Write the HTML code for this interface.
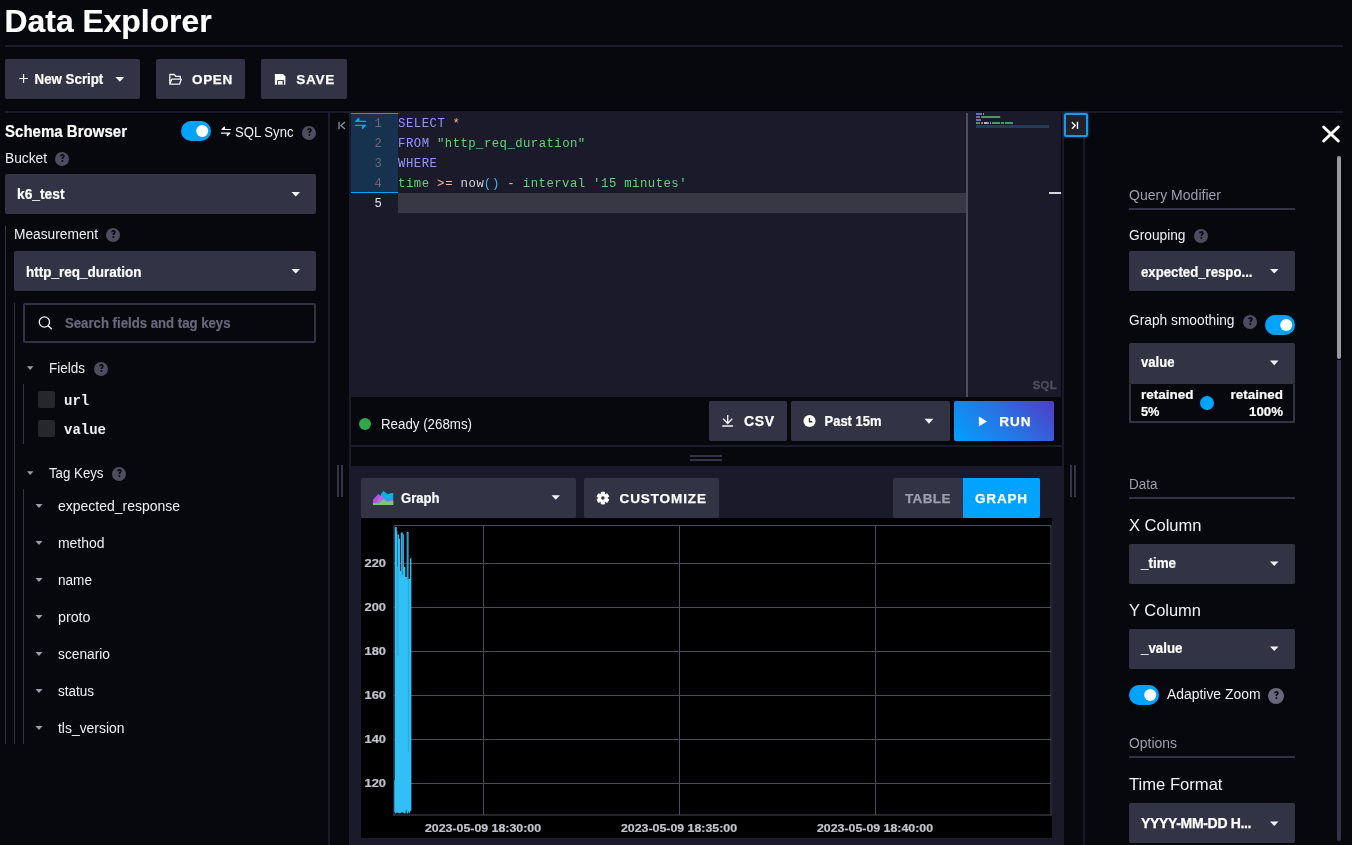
<!DOCTYPE html>
<html>
<head>
<meta charset="utf-8">
<title>Data Explorer</title>
<style>
*{box-sizing:border-box;margin:0;padding:0}
html,body{width:1352px;height:845px;overflow:hidden;background:#07070e}
body{font-family:"Liberation Sans",sans-serif;color:#f1f1f3;position:relative}
svg{position:absolute;left:0;top:0;will-change:transform}
text{white-space:pre}
</style>
</head>
<body>
<div style="position:absolute;left:5px;top:45px;width:1338px;height:2px;background:#1a1a2a;"></div>
<div style="position:absolute;left:5px;top:59px;width:135px;height:40px;background:#333346;border-radius:2px"></div>
<div style="position:absolute;left:156px;top:59px;width:89px;height:40px;background:#333346;border-radius:2px"></div>
<div style="position:absolute;left:261px;top:59px;width:86px;height:40px;background:#333346;border-radius:2px"></div>
<div style="position:absolute;left:5px;top:111px;width:1338px;height:2px;background:#1a1a2a;"></div>
<div style="position:absolute;left:5px;top:174px;width:311px;height:40px;background:#333346;border-radius:2px"></div>
<div style="position:absolute;left:5px;top:226px;width:1px;height:518px;background:#333346;"></div>
<div style="position:absolute;left:14px;top:251px;width:302px;height:40px;background:#333346;border-radius:2px"></div>
<div style="position:absolute;left:14px;top:303px;width:1px;height:441px;background:#333346;"></div>
<div style="position:absolute;left:23px;top:303px;width:293px;height:40px;border:2px solid #333346;border-radius:2px"></div>
<div style="position:absolute;left:23px;top:384px;width:1px;height:60px;background:#333346;"></div>
<div style="position:absolute;left:38px;top:391px;width:17px;height:17px;background:#26262d;border-radius:2px"></div>
<div style="position:absolute;left:38px;top:420px;width:17px;height:17px;background:#26262d;border-radius:2px"></div>
<div style="position:absolute;left:23px;top:489px;width:1px;height:255px;background:#333346;"></div>
<div style="position:absolute;left:328px;top:113px;width:2px;height:732px;background:#1a1a2a;"></div>
<div style="position:absolute;left:337px;top:465px;width:2px;height:32px;background:#333346;"></div>
<div style="position:absolute;left:341px;top:465px;width:2px;height:32px;background:#333346;"></div>
<div style="position:absolute;left:349px;top:111px;width:713px;height:734px;background:#1a1a2a;"></div>
<div style="position:absolute;left:351px;top:113px;width:47px;height:80px;background:#16324f;border-top:1px solid #00a3ff;border-bottom:1px solid #00a3ff"></div>
<div style="position:absolute;left:398px;top:193px;width:568px;height:20px;background:#383844;"></div>
<div style="position:absolute;left:966px;top:113px;width:2px;height:284px;background:#4d4d60;"></div>
<div style="position:absolute;left:351px;top:397px;width:711px;height:69px;background:#07070e;"></div>
<div style="position:absolute;left:351px;top:445px;width:711px;height:2px;background:#1a1a2a;"></div>
<div style="position:absolute;left:709px;top:401px;width:78px;height:40px;background:#333346;border-radius:2px"></div>
<div style="position:absolute;left:791px;top:401px;width:159px;height:40px;background:#333346;border-radius:2px"></div>
<div style="position:absolute;left:954px;top:401px;width:100px;height:40px;background:linear-gradient(45deg,#00a3ff 0%,#2b6fe0 55%,#513cc6 100%);border-radius:2px"></div>
<div style="position:absolute;left:690px;top:455px;width:32px;height:2px;background:#333346;"></div>
<div style="position:absolute;left:690px;top:459px;width:32px;height:2px;background:#333346;"></div>
<div style="position:absolute;left:361px;top:478px;width:215px;height:40px;background:#333346;border-radius:2px"></div>
<div style="position:absolute;left:584px;top:478px;width:135px;height:40px;background:#333346;border-radius:2px"></div>
<div style="position:absolute;left:893px;top:478px;width:70px;height:40px;background:#333346;border-radius:2px 0 0 2px"></div>
<div style="position:absolute;left:963px;top:478px;width:77px;height:40px;background:#00a3ff;border-radius:0 2px 2px 0"></div>
<div style="position:absolute;left:361px;top:518px;width:691px;height:320px;background:#000;"></div>
<div style="position:absolute;left:1061.2px;top:113px;width:0.8px;height:284px;background:#07070e;"></div>
<div style="position:absolute;left:1062px;top:113px;width:2px;height:732px;background:#1a1a2a;"></div>
<div style="position:absolute;left:1083px;top:113px;width:2px;height:732px;background:#1a1a2a;"></div>
<div style="position:absolute;left:1064px;top:113px;width:24px;height:24px;border:2px solid #1c98ea;border-radius:2.5px;background:#212129;box-shadow:0 0 2px #1c98ea"></div>
<div style="position:absolute;left:1070px;top:465px;width:2px;height:32px;background:#333346;"></div>
<div style="position:absolute;left:1074px;top:465px;width:2px;height:32px;background:#333346;"></div>
<div style="position:absolute;left:1337px;top:360px;width:4px;height:481px;background:#333346;border-radius:0 0 2px 2px"></div>
<div style="position:absolute;left:1337px;top:156px;width:4px;height:203px;background:#9a9a9a;border-radius:2px"></div>
<div style="position:absolute;left:1129px;top:208px;width:166px;height:2px;background:#333346;"></div>
<div style="position:absolute;left:1129px;top:251px;width:166px;height:40px;background:#333346;border-radius:2px"></div>
<div style="position:absolute;left:1129px;top:343px;width:166px;height:41px;background:#333346;border-radius:2px"></div>
<div style="position:absolute;left:1129px;top:384px;width:166px;height:39px;border:2px solid #333346;border-top:none"></div>
<div style="position:absolute;left:1129px;top:497px;width:166px;height:2px;background:#333346;"></div>
<div style="position:absolute;left:1129px;top:544px;width:166px;height:40px;background:#333346;border-radius:2px"></div>
<div style="position:absolute;left:1129px;top:629px;width:166px;height:40px;background:#333346;border-radius:2px"></div>
<div style="position:absolute;left:1129px;top:756px;width:166px;height:2px;background:#333346;"></div>
<div style="position:absolute;left:1129px;top:803px;width:166px;height:40px;background:#333346;border-radius:2px"></div>
<svg width="1352" height="845" viewBox="0 0 1352 845">
<path d="M115.4,77 h8.8 l-4.4,4.8 z" fill="#f1f1f3"/>
<rect x="181" y="121" width="30" height="20" rx="10" fill="#00a3ff"/>
<circle cx="202.2" cy="131" r="6" fill="#fff"/>
<circle cx="309.0" cy="133.0" r="7.0" fill="#4d4d60"/>
<path d="M307.90000000000003,130.3 C307.90000000000003,128.4 310.85,128.4 310.85,130.05 C310.85,131.3 309.35,131.4 309.35,133.1" stroke="#07070e" stroke-width="1.7" fill="none"/>
<circle cx="309.35" cy="135.05" r="1.0" fill="#07070e"/>
<circle cx="62.0" cy="159.0" r="7.0" fill="#4d4d60"/>
<path d="M60.9,156.3 C60.9,154.4 63.85,154.4 63.85,156.05 C63.85,157.3 62.35,157.4 62.35,159.1" stroke="#07070e" stroke-width="1.7" fill="none"/>
<circle cx="62.35" cy="161.05" r="1.0" fill="#07070e"/>
<path d="M291.5,192 h8.5 l-4.25,4.6 z" fill="#f1f1f3"/>
<circle cx="113.0" cy="235.0" r="7.0" fill="#4d4d60"/>
<path d="M111.89999999999999,232.3 C111.89999999999999,230.4 114.85,230.4 114.85,232.05 C114.85,233.3 113.35,233.4 113.35,235.1" stroke="#07070e" stroke-width="1.7" fill="none"/>
<circle cx="113.35" cy="237.05" r="1.0" fill="#07070e"/>
<path d="M291.5,269 h8.5 l-4.25,4.6 z" fill="#f1f1f3"/>
<path d="M27,366.2 h6.4 l-3.2,3.8 z" fill="#9e9ead"/>
<circle cx="101.0" cy="369.0" r="7.0" fill="#4d4d60"/>
<path d="M99.89999999999999,366.3 C99.89999999999999,364.4 102.85,364.4 102.85,366.05 C102.85,367.3 101.35,367.4 101.35,369.1" stroke="#07070e" stroke-width="1.7" fill="none"/>
<circle cx="101.35" cy="371.05" r="1.0" fill="#07070e"/>
<path d="M27,471.2 h6.4 l-3.2,3.8 z" fill="#9e9ead"/>
<circle cx="119.0" cy="474.0" r="7.0" fill="#4d4d60"/>
<path d="M117.89999999999999,471.3 C117.89999999999999,469.4 120.85,469.4 120.85,471.05 C120.85,472.3 119.35,472.4 119.35,474.1" stroke="#07070e" stroke-width="1.7" fill="none"/>
<circle cx="119.35" cy="476.05" r="1.0" fill="#07070e"/>
<path d="M35.5,504.0 h7 l-3.5,4 z" fill="#9e9ead"/>
<path d="M35.5,541.0 h7 l-3.5,4 z" fill="#9e9ead"/>
<path d="M35.5,578.0 h7 l-3.5,4 z" fill="#9e9ead"/>
<path d="M35.5,615.0 h7 l-3.5,4 z" fill="#9e9ead"/>
<path d="M35.5,652.0 h7 l-3.5,4 z" fill="#9e9ead"/>
<path d="M35.5,689.0 h7 l-3.5,4 z" fill="#9e9ead"/>
<path d="M35.5,726.0 h7 l-3.5,4 z" fill="#9e9ead"/>
<circle cx="365" cy="424" r="6" fill="#2fa74d"/>
<path d="M924.5,418.8 h9 l-4.5,5 z" fill="#f1f1f3"/>
<path d="M551.5,495.2 h8.5 l-4.25,4.6 z" fill="#f1f1f3"/>
<rect x="394" y="563" width="657" height="1" fill="#4b4b5f" shape-rendering="crispEdges"/>
<rect x="394" y="607" width="657" height="1" fill="#4b4b5f" shape-rendering="crispEdges"/>
<rect x="394" y="651" width="657" height="1" fill="#4b4b5f" shape-rendering="crispEdges"/>
<rect x="394" y="695" width="657" height="1" fill="#4b4b5f" shape-rendering="crispEdges"/>
<rect x="394" y="739" width="657" height="1" fill="#4b4b5f" shape-rendering="crispEdges"/>
<rect x="394" y="783" width="657" height="1" fill="#4b4b5f" shape-rendering="crispEdges"/>
<rect x="483" y="525" width="1" height="290" fill="#4b4b5f" shape-rendering="crispEdges"/>
<rect x="679" y="525" width="1" height="290" fill="#4b4b5f" shape-rendering="crispEdges"/>
<rect x="875" y="525" width="1" height="290" fill="#4b4b5f" shape-rendering="crispEdges"/>
<rect x="394" y="525" width="657" height="1" fill="#4b4b5f" shape-rendering="crispEdges"/>
<rect x="393.5" y="814.5" width="658" height="1" fill="#4b4b5f"/>
<rect x="393.5" y="525" width="1" height="290.5" fill="#4b4b5f"/>
<rect x="1050.5" y="525" width="1" height="290.5" fill="#4b4b5f"/>
<path d="M394.8,780 L394.8,527 L396.8,527 L396.8,531.2 L397.3,531.2 L397.3,534.4 L399,534.4 L399,538.7 L400,538.7 L400,571 L400.8,571 L400.8,532.5 L402.8,532.5 L402.8,534.4 L403.9,534.4 L403.9,567 L405.3,567 L405.3,577 L406.7,577 L406.7,532 L408.6,532 L408.6,579 L410,579 L410,558.2 L411.4,558.2 L411.4,810.5 L410.3,811 L409.9,813.2 L409.1,813.2 L408.7,811 L408.2,813.4 L406.6,813.4 L406.1,808.6 L405.6,813.4 L404.5,813.6 L402,812.2 L400,813.6 L397,812.6 L395.5,813.8 L394.3,811.5 L394.3,780.5 L394.8,780 Z" fill="#31c0f6"/>
<path d="M397.55,533 V567" stroke="#000" stroke-opacity=".55" stroke-width=".7" fill="none"/>
<path d="M397.75,567 V656" stroke="#000" stroke-opacity=".3" stroke-width=".5" fill="none"/>
<path d="M402.3,535 V575" stroke="#000" stroke-opacity=".55" stroke-width=".6" fill="none"/>
<path d="M407.85,533 V580" stroke="#000" stroke-opacity=".55" stroke-width=".5" fill="none"/>
<path d="M408.35,580 V752" stroke="#000" stroke-opacity=".3" stroke-width=".5" fill="none"/>
<circle cx="1201.0" cy="236.0" r="7.0" fill="#4d4d60"/>
<path d="M1199.8999999999999,233.3 C1199.8999999999999,231.4 1202.85,231.4 1202.85,233.05 C1202.85,234.3 1201.35,234.4 1201.35,236.1" stroke="#07070e" stroke-width="1.7" fill="none"/>
<circle cx="1201.35" cy="238.05" r="1.0" fill="#07070e"/>
<path d="M1270,269 h8.5 l-4.25,4.6 z" fill="#f1f1f3"/>
<circle cx="1250.0" cy="322.0" r="7.0" fill="#4d4d60"/>
<path d="M1248.8999999999999,319.3 C1248.8999999999999,317.4 1251.85,317.4 1251.85,319.05 C1251.85,320.3 1250.35,320.4 1250.35,322.1" stroke="#07070e" stroke-width="1.7" fill="none"/>
<circle cx="1250.35" cy="324.05" r="1.0" fill="#07070e"/>
<rect x="1265" y="315" width="30" height="20" rx="10" fill="#00a3ff"/>
<circle cx="1286.2" cy="325" r="6" fill="#fff"/>
<path d="M1270,360.6 h8.5 l-4.25,4.6 z" fill="#f1f1f3"/>
<circle cx="1207" cy="403" r="7" fill="#00a3ff"/>
<path d="M1270,561.5 h8.5 l-4.25,4.6 z" fill="#f1f1f3"/>
<path d="M1270,646.5 h8.5 l-4.25,4.6 z" fill="#f1f1f3"/>
<rect x="1129" y="685" width="30" height="20" rx="10" fill="#00a3ff"/>
<circle cx="1150.2" cy="695" r="6" fill="#fff"/>
<circle cx="1276.0" cy="696.0" r="8.0" fill="#68687b"/>
<path d="M1274.8999999999999,693.3 C1274.8999999999999,691.4 1277.85,691.4 1277.85,693.05 C1277.85,694.3 1276.35,694.4 1276.35,696.1" stroke="#07070e" stroke-width="1.7" fill="none"/>
<circle cx="1276.35" cy="698.05" r="1.0" fill="#07070e"/>
<path d="M1270,821.5 h8.5 l-4.25,4.6 z" fill="#f1f1f3"/>
<path d="M19.2,78.5 h8.7 M23.55,74.1 v8.8" stroke="#f1f1f3" stroke-width="1.2" fill="none"/>
<path d="M169.8,84.2 V74.5 H174.3 L175.8,76.3 H180.3 V78.4 M169.8,84.2 L171.7,79.2 H181.3 L179.5,84.2 Z" stroke="#f1f1f3" stroke-width="1.3" stroke-linejoin="round" fill="none"/>
<path d="M274.9,74 H283 L285.4,76.4 V84.7 H274.9 Z" fill="#fff"/>
<rect x="277.1" y="80.1" width="6.9" height="4.8" fill="#333346"/>
<rect x="278" y="81" width="4.9" height="3.6" fill="#f1f1f3"/>
<rect x="282.2" y="81" width="0.8" height="3.6" fill="#9e9ead"/>
<path d="M230.9,129.5 H222.0 L224.5,127.0 L224.5,129.5 M221.1,133.1 H230.0 L227.29999999999998,135.6 L227.29999999999998,133.1" stroke="#f1f1f3" stroke-width="1.1" stroke-linejoin="round" fill="#f1f1f3"/>
<circle cx="44.4" cy="322" r="5.15" stroke="#f1f1f3" stroke-width="1.3" fill="none"/>
<path d="M48.2,325.9 L51.4,328.7" stroke="#f1f1f3" stroke-width="1.4" stroke-linecap="round"/>
<path d="M339,121.8 V129.3 M345,122.1 L340.9,125.6 L345,129.1" stroke="#8e8e9e" stroke-width="1.3" fill="none"/>
<path d="M366.0,121.4 H355.70000000000005 L358.90000000000003,118.4 L358.90000000000003,121.4 M355.1,125.4 H365.70000000000005 L362.5,128.4 L362.5,125.4" stroke="#00a3ff" stroke-width="1.2" stroke-linejoin="round" fill="#00a3ff"/>
<path d="M1071.9,122.3 L1075.3,125.5 L1071.9,128.7 M1077.5,121.7 V129.1" stroke="#fff" stroke-width="1.4" fill="none"/>
<path d="M1323.7,127 L1338.3,141 M1338.3,127 L1323.7,141" stroke="#fff" stroke-width="3" stroke-linecap="round" fill="none"/>
<path d="M727.7,415.1 V423.5 M723.2,418.7 L727.7,423.4 L732.2,418.7 M722.2,426 H733.1" stroke="#f1f1f3" stroke-width="1.35" fill="none"/>
<circle cx="809.5" cy="421" r="6.05" fill="#fff"/>
<path d="M809.5,417.9 V421.7 H812.4" stroke="#333346" stroke-width="1.4" fill="none"/>
<path d="M978.9,416.5 L987,421.4 L978.9,426.3 Z" fill="#fff"/>
<path d="M380.9,494 L383.4,491 L387.9,494.3 L391.2,493.1 L393.2,493.1 V505 H380.9 Z" fill="#0bb1e2"/>
<path d="M373,500 L378.4,494.1 L379.9,495.4 L382.6,496 L387.5,500.9 L389.9,500.2 L393.2,499.6 V505 H373 Z" fill="#a96cee"/>
<path d="M373,500 L378.4,494.1 L379.9,495.4 L376,503 L373,502.5 Z" fill="#bb4fd0"/>
<path d="M373,503 L378.3,503.6 L383.2,499.4 L387.5,502 L391.2,500.9 L393.2,501 V505 H373 Z" fill="#7bc96d"/>
<polygon points="601.22,492.24 604.58,492.24 604.51,493.90 605.73,494.60 607.14,493.71 608.82,496.62 607.34,497.40 607.34,498.80 608.82,499.58 607.14,502.49 605.73,501.60 604.51,502.30 604.58,503.96 601.22,503.96 601.29,502.30 600.07,501.60 598.66,502.49 596.98,499.58 598.46,498.80 598.46,497.40 596.98,496.62 598.66,493.71 600.07,494.60 601.29,493.90" fill="#fff" stroke="#fff" stroke-width="1" stroke-linejoin="round"/>
<circle cx="602.9" cy="498.1" r="1.75" fill="#333346"/>
<rect x="976" y="113" width="6" height="2" fill="#6b6cc0"/>
<rect x="983" y="113" width="0.9" height="2" fill="#c08a78"/>
<rect x="976" y="116" width="4" height="2" fill="#6b6cc0"/>
<rect x="981.2" y="116" width="19" height="2" fill="#4c9a5e"/>
<rect x="976" y="119" width="5" height="2" fill="#6b6cc0"/>
<rect x="976" y="122" width="4" height="2" fill="#4c9a5e"/>
<rect x="981.2" y="122" width="1.8" height="2" fill="#c08a78"/>
<rect x="984" y="122" width="3" height="2" fill="#b9b9c5"/>
<rect x="987" y="122" width="2" height="2" fill="#3f9fd0"/>
<rect x="990" y="122" width="0.9" height="2" fill="#c08a78"/>
<rect x="992" y="122" width="8" height="2" fill="#4c9a5e"/>
<rect x="1001" y="122" width="3" height="2" fill="#4c9a5e"/>
<rect x="1005" y="122" width="8" height="2" fill="#4c9a5e"/>
<rect x="976" y="125" width="73" height="3" fill="#243b5a"/>
<rect x="1049" y="192" width="12" height="2" fill="#d5d5dd"/>
<text x="4.6" y="31.7" font-family="Liberation Sans, sans-serif" font-size="31" font-weight="bold" stroke="#fff" stroke-width="0.2" fill="#fff" textLength="207" lengthAdjust="spacingAndGlyphs" xml:space="preserve">Data Explorer</text>
<text x="34.6" y="84" font-family="Liberation Sans, sans-serif" font-size="14" font-weight="bold" stroke="#fff" stroke-width="0.2" fill="#fff" textLength="68.7" lengthAdjust="spacingAndGlyphs" xml:space="preserve">New Script</text>
<text x="192" y="84" font-family="Liberation Sans, sans-serif" font-size="13.5" font-weight="bold" stroke="#fff" stroke-width="0.25" fill="#fff" textLength="40.3" lengthAdjust="spacing" xml:space="preserve">OPEN</text>
<text x="296.3" y="84" font-family="Liberation Sans, sans-serif" font-size="13.5" font-weight="bold" stroke="#fff" stroke-width="0.25" fill="#fff" textLength="38" lengthAdjust="spacing" xml:space="preserve">SAVE</text>
<text x="5" y="136.5" font-family="Liberation Sans, sans-serif" font-size="16" font-weight="bold" stroke="#fff" stroke-width="0.2" fill="#fff" textLength="122" lengthAdjust="spacingAndGlyphs" xml:space="preserve">Schema Browser</text>
<text x="235" y="136.5" font-family="Liberation Sans, sans-serif" font-size="14" fill="#f1f1f3" textLength="58.5" lengthAdjust="spacingAndGlyphs" xml:space="preserve">SQL Sync</text>
<text x="5" y="162.5" font-family="Liberation Sans, sans-serif" font-size="14" fill="#f1f1f3" textLength="42" lengthAdjust="spacingAndGlyphs" xml:space="preserve">Bucket</text>
<text x="17" y="199" font-family="Liberation Sans, sans-serif" font-size="14" font-weight="bold" stroke="#fff" stroke-width="0.2" fill="#fff" textLength="47.5" lengthAdjust="spacingAndGlyphs" xml:space="preserve">k6_test</text>
<text x="14" y="239" font-family="Liberation Sans, sans-serif" font-size="14" fill="#f1f1f3" textLength="84" lengthAdjust="spacingAndGlyphs" xml:space="preserve">Measurement</text>
<text x="26" y="276.5" font-family="Liberation Sans, sans-serif" font-size="14" font-weight="bold" stroke="#fff" stroke-width="0.2" fill="#fff" textLength="115.5" lengthAdjust="spacingAndGlyphs" xml:space="preserve">http_req_duration</text>
<text x="65" y="328" font-family="Liberation Sans, sans-serif" font-size="14" font-weight="bold" stroke="#68687b" stroke-width="0.2" fill="#68687b" textLength="165.5" lengthAdjust="spacingAndGlyphs" xml:space="preserve">Search fields and tag keys</text>
<text x="49" y="372.5" font-family="Liberation Sans, sans-serif" font-size="14" fill="#f1f1f3" textLength="36" lengthAdjust="spacingAndGlyphs" xml:space="preserve">Fields</text>
<text x="64" y="405" font-family="Liberation Mono, monospace" font-size="14" font-weight="bold" fill="#f1f1f3" textLength="25.2" lengthAdjust="spacing" xml:space="preserve">url</text>
<text x="64" y="434" font-family="Liberation Mono, monospace" font-size="14" font-weight="bold" fill="#f1f1f3" textLength="42" lengthAdjust="spacing" xml:space="preserve">value</text>
<text x="49" y="477.5" font-family="Liberation Sans, sans-serif" font-size="14" fill="#f1f1f3" textLength="54.5" lengthAdjust="spacingAndGlyphs" xml:space="preserve">Tag Keys</text>
<text x="58" y="510.5" font-family="Liberation Sans, sans-serif" font-size="14" fill="#f1f1f3" textLength="122" lengthAdjust="spacingAndGlyphs" xml:space="preserve">expected_response</text>
<text x="58" y="547.5" font-family="Liberation Sans, sans-serif" font-size="14" fill="#f1f1f3" textLength="46.5" lengthAdjust="spacingAndGlyphs" xml:space="preserve">method</text>
<text x="58" y="584.5" font-family="Liberation Sans, sans-serif" font-size="14" fill="#f1f1f3" textLength="34" lengthAdjust="spacingAndGlyphs" xml:space="preserve">name</text>
<text x="58" y="621.5" font-family="Liberation Sans, sans-serif" font-size="14" fill="#f1f1f3" textLength="32.5" lengthAdjust="spacingAndGlyphs" xml:space="preserve">proto</text>
<text x="58" y="658.5" font-family="Liberation Sans, sans-serif" font-size="14" fill="#f1f1f3" textLength="52" lengthAdjust="spacingAndGlyphs" xml:space="preserve">scenario</text>
<text x="58" y="695.5" font-family="Liberation Sans, sans-serif" font-size="14" fill="#f1f1f3" textLength="36" lengthAdjust="spacingAndGlyphs" xml:space="preserve">status</text>
<text x="58" y="732.5" font-family="Liberation Sans, sans-serif" font-size="14" fill="#f1f1f3" textLength="66.5" lengthAdjust="spacingAndGlyphs" xml:space="preserve">tls_version</text>
<text x="374.4" y="127.2" font-family="Liberation Mono, monospace" font-size="12.2" fill="#68687b" xml:space="preserve">1</text>
<text x="374.4" y="147.2" font-family="Liberation Mono, monospace" font-size="12.2" fill="#68687b" xml:space="preserve">2</text>
<text x="374.4" y="167.2" font-family="Liberation Mono, monospace" font-size="12.2" fill="#68687b" xml:space="preserve">3</text>
<text x="374.4" y="187.2" font-family="Liberation Mono, monospace" font-size="12.2" fill="#68687b" xml:space="preserve">4</text>
<text x="374.4" y="207.2" font-family="Liberation Mono, monospace" font-size="12.2" fill="#e4e4ea" xml:space="preserve">5</text>
<text x="398" y="127.2" font-family="Liberation Mono, monospace" font-size="12.3" fill="#9394ff" textLength="46.8" lengthAdjust="spacing" xml:space="preserve">SELECT</text>
<text x="444.8" y="127.2" font-family="Liberation Mono, monospace" font-size="12.3" fill="#9394ff" xml:space="preserve"> </text>
<text x="452.6" y="127.2" font-family="Liberation Mono, monospace" font-size="12.3" fill="#ffb6a0" xml:space="preserve">*</text>
<text x="398" y="147.2" font-family="Liberation Mono, monospace" font-size="12.3" fill="#9394ff" textLength="31.2" lengthAdjust="spacing" xml:space="preserve">FROM</text>
<text x="429.2" y="147.2" font-family="Liberation Mono, monospace" font-size="12.3" fill="#9394ff" xml:space="preserve"> </text>
<text x="437.0" y="147.2" font-family="Liberation Mono, monospace" font-size="12.3" fill="#67d17a" textLength="148.2" lengthAdjust="spacing" xml:space="preserve">&quot;http_req_duration&quot;</text>
<text x="398" y="167.2" font-family="Liberation Mono, monospace" font-size="12.3" fill="#9394ff" textLength="39.0" lengthAdjust="spacing" xml:space="preserve">WHERE</text>
<text x="398" y="187.2" font-family="Liberation Mono, monospace" font-size="12.3" fill="#67d17a" textLength="31.2" lengthAdjust="spacing" xml:space="preserve">time</text>
<text x="429.2" y="187.2" font-family="Liberation Mono, monospace" font-size="12.3" fill="#9394ff" xml:space="preserve"> </text>
<text x="437.0" y="187.2" font-family="Liberation Mono, monospace" font-size="12.3" fill="#ffb6a0" textLength="15.6" lengthAdjust="spacing" xml:space="preserve">&gt;=</text>
<text x="452.6" y="187.2" font-family="Liberation Mono, monospace" font-size="12.3" fill="#9394ff" xml:space="preserve"> </text>
<text x="460.40000000000003" y="187.2" font-family="Liberation Mono, monospace" font-size="12.3" fill="#d5d5dd" textLength="23.4" lengthAdjust="spacing" xml:space="preserve">now</text>
<text x="483.8" y="187.2" font-family="Liberation Mono, monospace" font-size="12.3" fill="#4ab6e8" textLength="15.6" lengthAdjust="spacing" xml:space="preserve">()</text>
<text x="499.40000000000003" y="187.2" font-family="Liberation Mono, monospace" font-size="12.3" fill="#9394ff" xml:space="preserve"> </text>
<text x="507.20000000000005" y="187.2" font-family="Liberation Mono, monospace" font-size="12.3" fill="#ffb6a0" xml:space="preserve">-</text>
<text x="515.0" y="187.2" font-family="Liberation Mono, monospace" font-size="12.3" fill="#9394ff" xml:space="preserve"> </text>
<text x="522.8" y="187.2" font-family="Liberation Mono, monospace" font-size="12.3" fill="#67d17a" textLength="62.4" lengthAdjust="spacing" xml:space="preserve">interval</text>
<text x="585.1999999999999" y="187.2" font-family="Liberation Mono, monospace" font-size="12.3" fill="#9394ff" xml:space="preserve"> </text>
<text x="592.9999999999999" y="187.2" font-family="Liberation Mono, monospace" font-size="12.3" fill="#67d17a" textLength="23.4" lengthAdjust="spacing" xml:space="preserve">&#x27;15</text>
<text x="616.3999999999999" y="187.2" font-family="Liberation Mono, monospace" font-size="12.3" fill="#9394ff" xml:space="preserve"> </text>
<text x="624.1999999999998" y="187.2" font-family="Liberation Mono, monospace" font-size="12.3" fill="#67d17a" textLength="62.4" lengthAdjust="spacing" xml:space="preserve">minutes&#x27;</text>
<text x="1032.8" y="389.2" font-family="Liberation Sans, sans-serif" font-size="11.3" font-weight="bold" stroke="#4d4d60" stroke-width="0.35" fill="#4d4d60" textLength="23.8" lengthAdjust="spacing" xml:space="preserve">SQL</text>
<text x="381" y="429" font-family="Liberation Sans, sans-serif" font-size="15" fill="#f1f1f3" textLength="91" lengthAdjust="spacingAndGlyphs" xml:space="preserve">Ready (268ms)</text>
<text x="744" y="426.3" font-family="Liberation Sans, sans-serif" font-size="14" font-weight="bold" stroke="#fff" stroke-width="0.25" fill="#fff" textLength="30" lengthAdjust="spacing" xml:space="preserve">CSV</text>
<text x="824.5" y="426.3" font-family="Liberation Sans, sans-serif" font-size="14" font-weight="bold" stroke="#fff" stroke-width="0.2" fill="#fff" textLength="57" lengthAdjust="spacingAndGlyphs" xml:space="preserve">Past 15m</text>
<text x="999.2" y="426.2" font-family="Liberation Sans, sans-serif" font-size="13.5" font-weight="bold" stroke="#fff" stroke-width="0.25" fill="#fff" textLength="31.2" lengthAdjust="spacing" xml:space="preserve">RUN</text>
<text x="401" y="503" font-family="Liberation Sans, sans-serif" font-size="14" font-weight="bold" stroke="#fff" stroke-width="0.2" fill="#fff" textLength="38.5" lengthAdjust="spacingAndGlyphs" xml:space="preserve">Graph</text>
<text x="619.5" y="503" font-family="Liberation Sans, sans-serif" font-size="13.5" font-weight="bold" stroke="#fff" stroke-width="0.25" fill="#fff" textLength="86.5" lengthAdjust="spacing" xml:space="preserve">CUSTOMIZE</text>
<text x="905" y="503" font-family="Liberation Sans, sans-serif" font-size="13.5" font-weight="bold" stroke="#9e9ead" stroke-width="0.25" fill="#9e9ead" textLength="45.5" lengthAdjust="spacing" xml:space="preserve">TABLE</text>
<text x="975" y="503" font-family="Liberation Sans, sans-serif" font-size="13.5" font-weight="bold" stroke="#fff" stroke-width="0.25" fill="#fff" textLength="52" lengthAdjust="spacing" xml:space="preserve">GRAPH</text>
<text x="364.5" y="567" font-family="Liberation Sans, sans-serif" font-size="11.5" font-weight="bold" stroke="#c3c3ce" stroke-width="0.2" fill="#c3c3ce" textLength="21.5" lengthAdjust="spacingAndGlyphs" xml:space="preserve">220</text>
<text x="364.5" y="611" font-family="Liberation Sans, sans-serif" font-size="11.5" font-weight="bold" stroke="#c3c3ce" stroke-width="0.2" fill="#c3c3ce" textLength="21.5" lengthAdjust="spacingAndGlyphs" xml:space="preserve">200</text>
<text x="364.5" y="655" font-family="Liberation Sans, sans-serif" font-size="11.5" font-weight="bold" stroke="#c3c3ce" stroke-width="0.2" fill="#c3c3ce" textLength="21.5" lengthAdjust="spacingAndGlyphs" xml:space="preserve">180</text>
<text x="364.5" y="699" font-family="Liberation Sans, sans-serif" font-size="11.5" font-weight="bold" stroke="#c3c3ce" stroke-width="0.2" fill="#c3c3ce" textLength="21.5" lengthAdjust="spacingAndGlyphs" xml:space="preserve">160</text>
<text x="364.5" y="743" font-family="Liberation Sans, sans-serif" font-size="11.5" font-weight="bold" stroke="#c3c3ce" stroke-width="0.2" fill="#c3c3ce" textLength="21.5" lengthAdjust="spacingAndGlyphs" xml:space="preserve">140</text>
<text x="364.5" y="787" font-family="Liberation Sans, sans-serif" font-size="11.5" font-weight="bold" stroke="#c3c3ce" stroke-width="0.2" fill="#c3c3ce" textLength="21.5" lengthAdjust="spacingAndGlyphs" xml:space="preserve">120</text>
<text x="425" y="831.5" font-family="Liberation Sans, sans-serif" font-size="11.5" font-weight="bold" stroke="#c3c3ce" stroke-width="0.2" fill="#c3c3ce" textLength="116" lengthAdjust="spacingAndGlyphs" xml:space="preserve">2023-05-09 18:30:00</text>
<text x="621" y="831.5" font-family="Liberation Sans, sans-serif" font-size="11.5" font-weight="bold" stroke="#c3c3ce" stroke-width="0.2" fill="#c3c3ce" textLength="116" lengthAdjust="spacingAndGlyphs" xml:space="preserve">2023-05-09 18:35:00</text>
<text x="817" y="831.5" font-family="Liberation Sans, sans-serif" font-size="11.5" font-weight="bold" stroke="#c3c3ce" stroke-width="0.2" fill="#c3c3ce" textLength="116" lengthAdjust="spacingAndGlyphs" xml:space="preserve">2023-05-09 18:40:00</text>
<text x="1129" y="199.5" font-family="Liberation Sans, sans-serif" font-size="14" fill="#9e9ead" textLength="92" lengthAdjust="spacingAndGlyphs" xml:space="preserve">Query Modifier</text>
<text x="1129" y="239.5" font-family="Liberation Sans, sans-serif" font-size="14" fill="#f1f1f3" textLength="56.5" lengthAdjust="spacingAndGlyphs" xml:space="preserve">Grouping</text>
<text x="1141" y="276.5" font-family="Liberation Sans, sans-serif" font-size="14" font-weight="bold" stroke="#fff" stroke-width="0.2" fill="#fff" textLength="111.5" lengthAdjust="spacingAndGlyphs" xml:space="preserve">expected_respo...</text>
<text x="1129" y="325" font-family="Liberation Sans, sans-serif" font-size="14" fill="#f1f1f3" textLength="105.5" lengthAdjust="spacingAndGlyphs" xml:space="preserve">Graph smoothing</text>
<text x="1141" y="366.5" font-family="Liberation Sans, sans-serif" font-size="14" font-weight="bold" stroke="#fff" stroke-width="0.2" fill="#fff" textLength="33.5" lengthAdjust="spacingAndGlyphs" xml:space="preserve">value</text>
<text x="1141" y="399" font-family="Liberation Sans, sans-serif" font-size="13.5" font-weight="bold" stroke="#fff" stroke-width="0.2" fill="#fff" textLength="52.5" lengthAdjust="spacingAndGlyphs" xml:space="preserve">retained</text>
<text x="1141" y="416" font-family="Liberation Sans, sans-serif" font-size="13.5" font-weight="bold" stroke="#fff" stroke-width="0.2" fill="#fff" textLength="18.5" lengthAdjust="spacingAndGlyphs" xml:space="preserve">5%</text>
<text x="1230.5" y="399" font-family="Liberation Sans, sans-serif" font-size="13.5" font-weight="bold" stroke="#fff" stroke-width="0.2" fill="#fff" textLength="52.5" lengthAdjust="spacingAndGlyphs" xml:space="preserve">retained</text>
<text x="1249" y="416" font-family="Liberation Sans, sans-serif" font-size="13.5" font-weight="bold" stroke="#fff" stroke-width="0.2" fill="#fff" textLength="34" lengthAdjust="spacingAndGlyphs" xml:space="preserve">100%</text>
<text x="1129" y="488.5" font-family="Liberation Sans, sans-serif" font-size="14" fill="#9e9ead" textLength="28.5" lengthAdjust="spacingAndGlyphs" xml:space="preserve">Data</text>
<text x="1129" y="531" font-family="Liberation Sans, sans-serif" font-size="16.5" fill="#f1f1f3" textLength="72.5" lengthAdjust="spacingAndGlyphs" xml:space="preserve">X Column</text>
<text x="1141" y="568" font-family="Liberation Sans, sans-serif" font-size="14" font-weight="bold" stroke="#fff" stroke-width="0.2" fill="#fff" textLength="35" lengthAdjust="spacingAndGlyphs" xml:space="preserve">_time</text>
<text x="1129" y="616" font-family="Liberation Sans, sans-serif" font-size="16.5" fill="#f1f1f3" textLength="72" lengthAdjust="spacingAndGlyphs" xml:space="preserve">Y Column</text>
<text x="1141" y="653" font-family="Liberation Sans, sans-serif" font-size="14" font-weight="bold" stroke="#fff" stroke-width="0.2" fill="#fff" textLength="41.5" lengthAdjust="spacingAndGlyphs" xml:space="preserve">_value</text>
<text x="1167" y="699" font-family="Liberation Sans, sans-serif" font-size="14" fill="#f1f1f3" textLength="93.5" lengthAdjust="spacingAndGlyphs" xml:space="preserve">Adaptive Zoom</text>
<text x="1129" y="748" font-family="Liberation Sans, sans-serif" font-size="14" fill="#9e9ead" textLength="48" lengthAdjust="spacingAndGlyphs" xml:space="preserve">Options</text>
<text x="1129" y="790" font-family="Liberation Sans, sans-serif" font-size="16.5" fill="#f1f1f3" textLength="93.5" lengthAdjust="spacingAndGlyphs" xml:space="preserve">Time Format</text>
<text x="1141" y="828" font-family="Liberation Sans, sans-serif" font-size="14" font-weight="bold" stroke="#fff" stroke-width="0.25" fill="#fff" textLength="110.5" lengthAdjust="spacing" xml:space="preserve">YYYY-MM-DD H...</text>
</svg>
</body>
</html>
